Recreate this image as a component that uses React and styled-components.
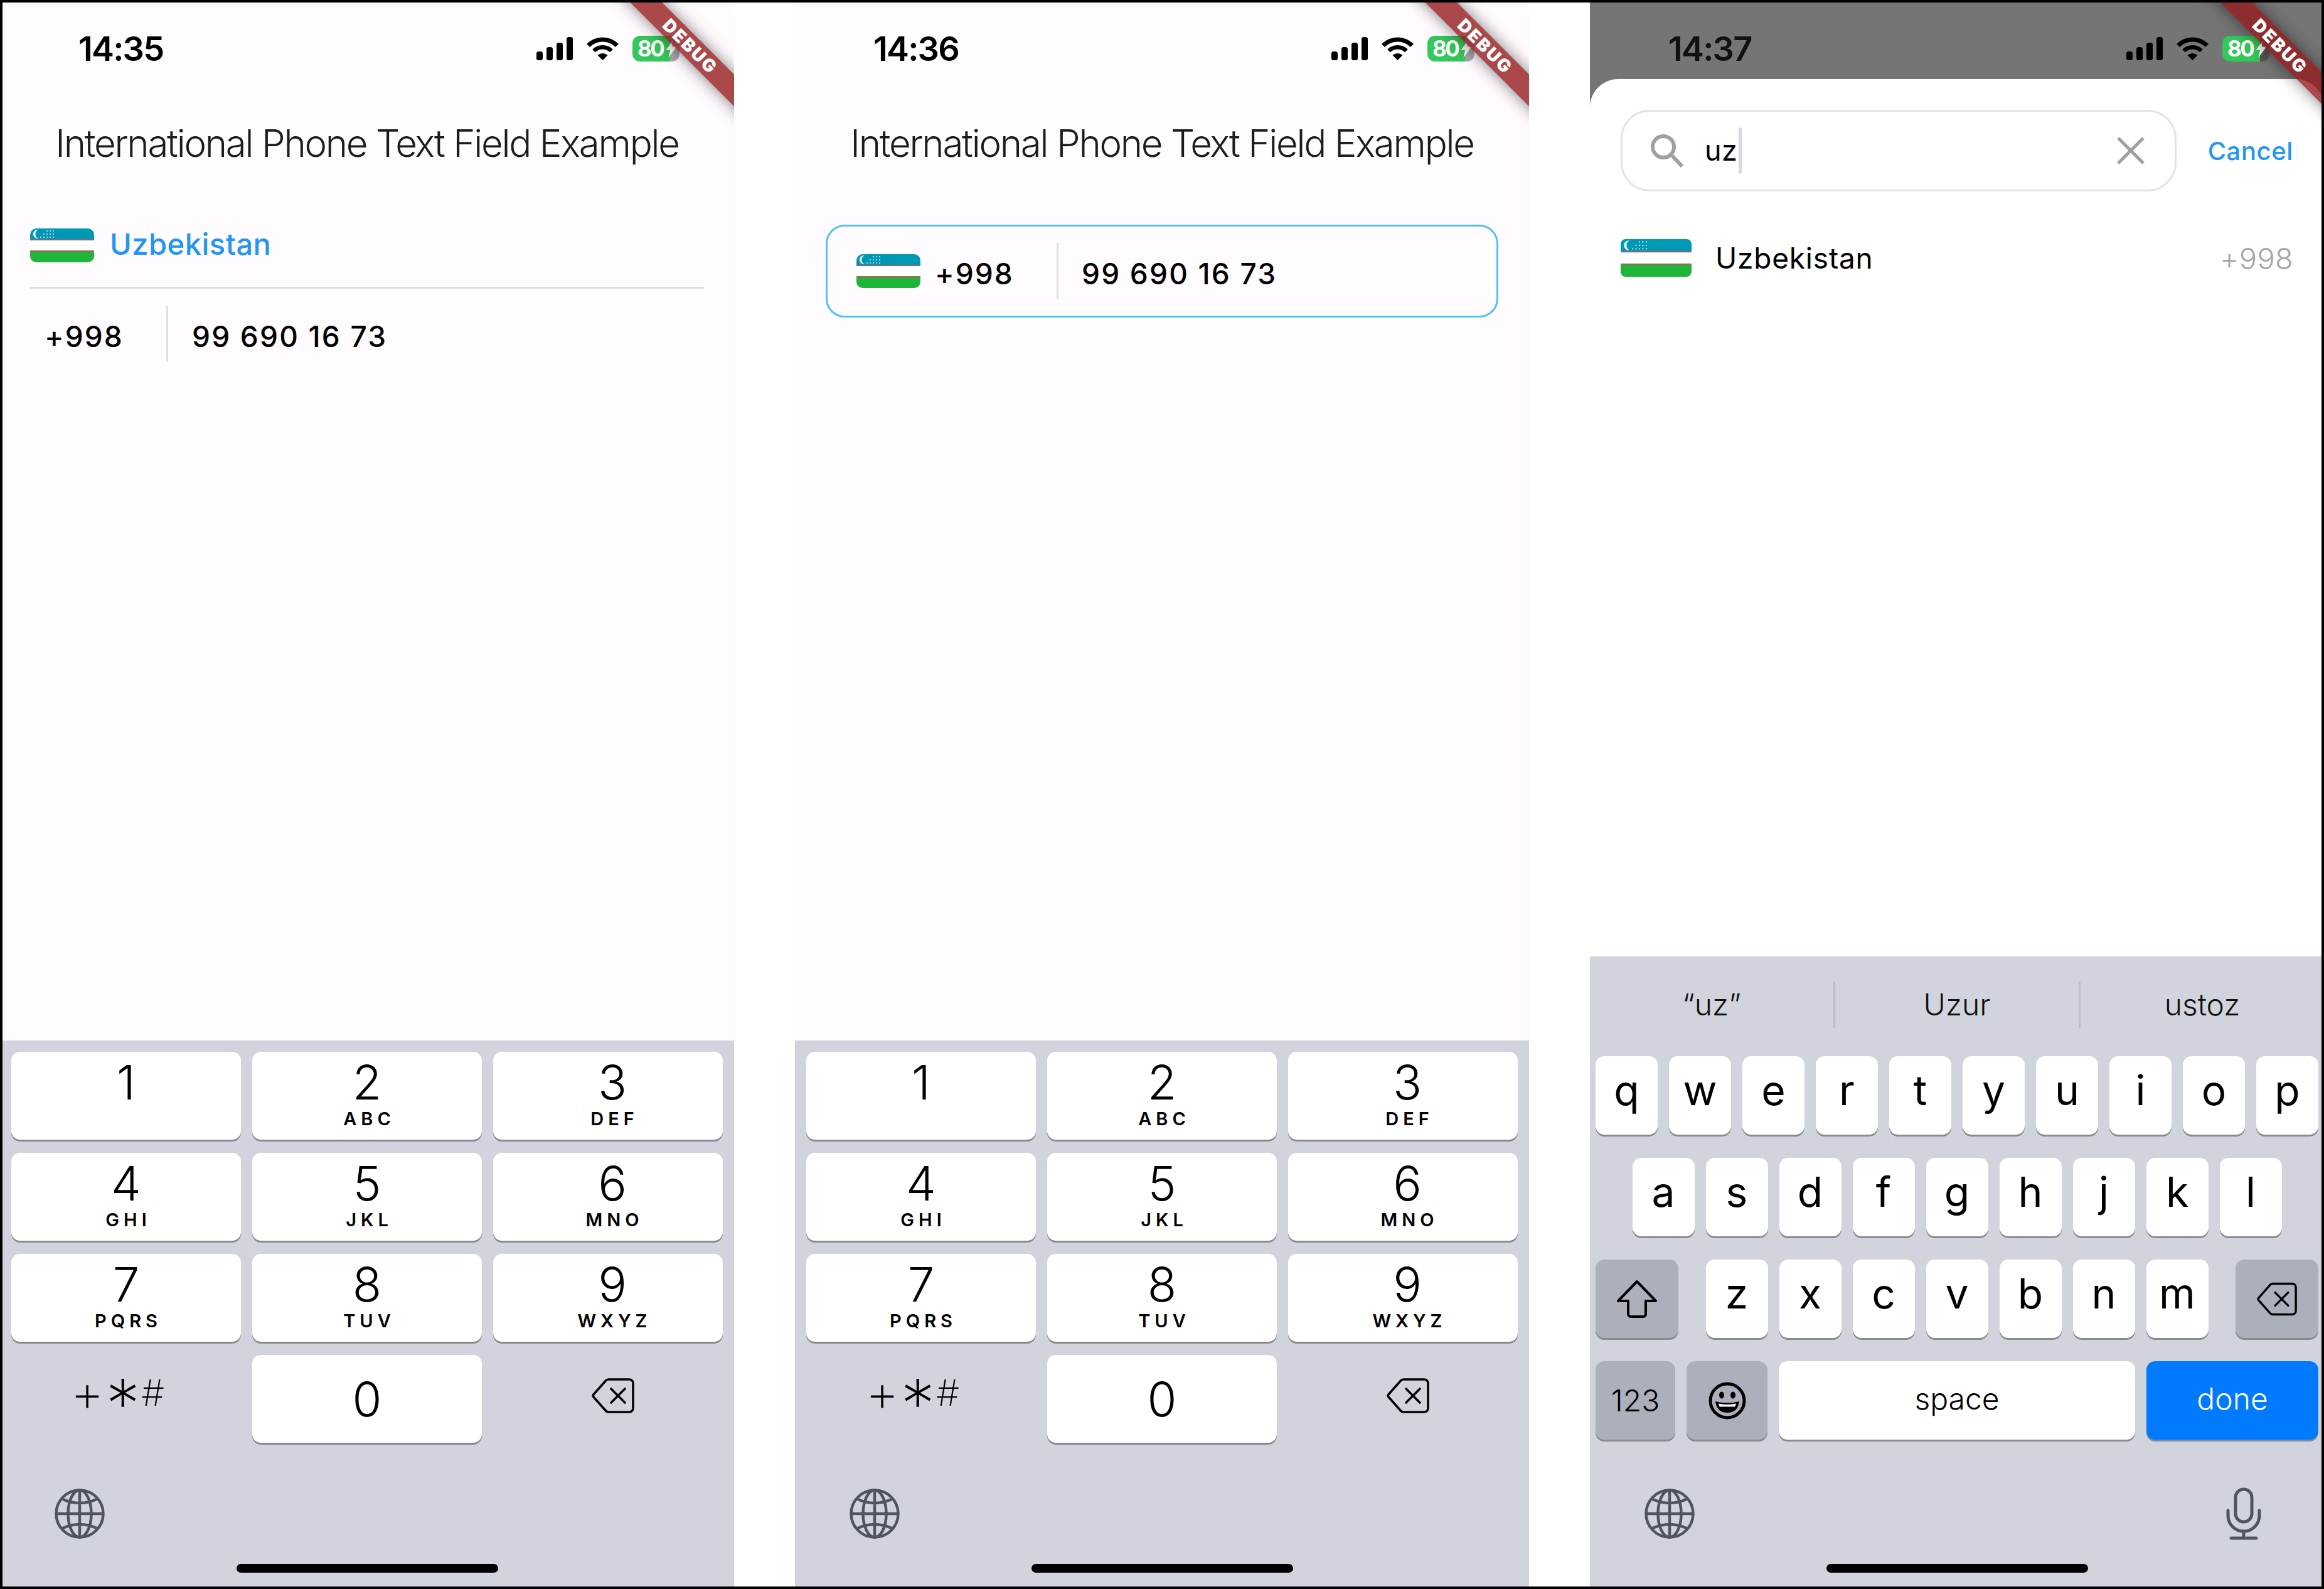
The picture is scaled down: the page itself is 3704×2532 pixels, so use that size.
import React from 'react'
import styled, { createGlobalStyle } from 'styled-components'

const GlobalStyle = createGlobalStyle`
  html, body { margin: 0; padding: 0; background: #fff; }
  * { box-sizing: border-box; }
`

const Page = styled.div`
  position: relative;
  width: 3704px;
  height: 2532px;
  background: #fff;
  display: flex;
  justify-content: space-between;
  font-family: Inter, "Liberation Sans", sans-serif;
  color: #000;
  overflow: hidden;
`

// the black line of the screenshot runs over the outer phones
const Frame = styled.div`
  position: absolute;
  inset: 0;
  border: 4px solid #000;
  pointer-events: none;
`

const Phone = styled.div`
  position: relative;
  width: 1170px;
  height: 100%;
  padding: 4px 0;
  overflow: hidden;
  display: flex;
  flex-direction: column;
  background: ${(p) => (p.$dim ? '#757575' : '#fffbff')};
`

const StatusBar = styled.div`
  height: 122px;
  flex-shrink: 0;
  padding: 53px 0 0 125px;
  display: flex;
  align-items: flex-start;
`

const Time = styled.div`
  width: 730px;
  font-size: 54px;
  line-height: 41px;
  font-weight: 600;
  letter-spacing: -1.8px;
  color: ${(p) => (p.$dim ? '#111' : '#000')};
`

const StatusIcons = styled.div`
  display: flex;
  align-items: center;
  height: 41px;
  gap: 22px;
`

const Battery = styled.div`
  width: 75px;
  height: 41px;
  border-radius: 12px;
  background: linear-gradient(90deg, #34c759 0 60px, ${(p) => (p.$dim ? '#555' : '#a9a9ab')} 60px);
  color: #fff;
  display: flex;
  align-items: center;
  gap: 4px;
  padding-left: 8px;
  font-size: 35px;
  line-height: 41px;
  font-weight: 700;
  letter-spacing: -2.5px;
`

const BannerClip = styled.div`
  position: absolute;
  top: 0;
  right: 0;
  width: 240px;
  height: 240px;
  overflow: hidden;
  pointer-events: none;
`

const BannerStrip = styled.div`
  position: absolute;
  left: -30px;
  top: 56px;
  width: 400px;
  height: 36px;
  transform: rotate(45deg);
  background: rgba(148, 26, 26, 0.79);
  box-shadow: 0 0 26px rgba(0, 0, 0, 0.5);
  color: #fff;
  font-size: 28px;
  line-height: 36px;
  font-weight: 900;
  letter-spacing: 2.6px;
  text-align: center;
`

const AppTitle = styled.div`
  margin-top: 52px;
  height: 100px;
  line-height: 100px;
  text-align: center;
  font-size: 60px;
  font-weight: 300;
  letter-spacing: -2.25px;
  color: #1c1b1f;
`

const Body = styled.div`
  padding: 0 48px;
`

const CountryRow = styled.div`
  margin-top: 66px;
  padding: 20px 0 39px;
  border-bottom: 3px solid #e0dde0;
  display: flex;
  align-items: center;
  gap: 25px;
`

const CountryName = styled.span`
  font-size: 47px;
  line-height: 50px;
  margin-bottom: 4px;
  font-weight: 500;
  letter-spacing: 0.5px;
  color: #2196f3;
`

const NumberRow = styled.div`
  margin-top: 27px;
  height: 90px;
  display: flex;
  align-items: center;
`

const Prefix = styled.div`
  width: 220px;
  height: 100%;
  padding: 8px 0 0 23px;
  border-right: 3px solid #e2dfe2;
  font-size: 46px;
  line-height: 82px;
  font-weight: 500;
  letter-spacing: 2px;
`

const PhoneNumber = styled.div`
  padding: 8px 0 0 ${(p) => p.$gap}px;
  font-size: 46px;
  line-height: 82px;
  font-weight: 500;
  letter-spacing: 2.2px;
`

const OutlineField = styled.div`
  margin: 80px 0 0 49px;
  width: 1072px;
  height: 148px;
  border: 3px solid #4fc3f7;
  border-radius: 30px;
  display: flex;
  align-items: center;
  padding-left: 46px;
`

const FieldPrefix = styled.div`
  margin-left: 23px;
  width: 197px;
  height: 90px;
  border-right: 3px solid #e2dfe2;
  padding-top: 8px;
  font-size: 46px;
  line-height: 82px;
  font-weight: 500;
  letter-spacing: 2px;
`

const Sheet = styled.div`
  flex: 1;
  display: flex;
  flex-direction: column;
  background: #fff;
  border-radius: 45px 45px 0 0;
  overflow: hidden;
`

const SearchRow = styled.div`
  padding: 49px 49px 0 49px;
  display: flex;
  align-items: center;
  justify-content: space-between;
`

const SearchBox = styled.div`
  width: 886px;
  height: 130px;
  border: 3px solid #e3e3e3;
  border-radius: 46px;
  display: flex;
  align-items: center;
  padding: 0 48px 0 44px;
`

const SearchText = styled.div`
  margin-left: 33px;
  font-size: 45px;
  line-height: 60px;
  letter-spacing: 0.5px;
`

const Caret = styled.div`
  width: 5px;
  height: 74px;
  margin: 0 auto 0 2px;
  border-radius: 3px;
  background: #d6d6ee;
`

const CancelLink = styled.span`
  font-size: 40px;
  font-weight: 500;
  letter-spacing: 0.6px;
  color: #2196f3;
`

const ResultRow = styled.div`
  margin-top: 76px;
  padding: 0 49px;
  display: flex;
  align-items: center;
`

const ResultName = styled.span`
  margin-left: 38px;
  flex: 1;
  font-size: 46px;
  font-weight: 400;
  letter-spacing: 0.8px;
`

const ResultCode = styled.span`
  font-size: 47px;
  font-weight: 300;
  letter-spacing: 0.3px;
  color: #a6a6a6;
`

const Keyboard = styled.div`
  margin-top: auto;
  height: ${(p) => p.$height}px;
  flex-shrink: 0;
  background: #d1d4dc;
  display: flex;
  flex-direction: column;
`

const PadGrid = styled.div`
  padding: 18px 18px 0;
  display: grid;
  grid-template-columns: repeat(3, 366px);
  grid-auto-rows: 140px;
  column-gap: 18px;
  row-gap: 21px;
`

const PadKey = styled.div`
  background: ${(p) => (p.$flat ? 'transparent' : '#fff')};
  border-radius: 14px;
  box-shadow: ${(p) => (p.$flat ? 'none' : '0 3px 0 #898a8d')};
  display: flex;
  flex-direction: column;
  align-items: center;
  justify-content: ${(p) => (p.$center ? 'center' : 'flex-start')};
  padding-top: ${(p) => (p.$center ? 0 : 10)}px;
  &:nth-child(3n) {
    padding-left: 14px;
  }
`

const Digit = styled.div`
  font-size: 76px;
  line-height: 76px;
  font-weight: 350;
`

const Letters = styled.div`
  margin-top: 6px;
  font-size: 29px;
  line-height: 30px;
  font-weight: 600;
  letter-spacing: 7px;
  padding-left: 7px;
`

const Symbols = styled.div`
  display: flex;
  align-items: center;
  height: 60px;
  gap: 2px;
  margin: 0 28px 20px 0;
  font-weight: 200;
`

const Symbol = styled.span`
  font-size: ${(p) => p.$size}px;
  line-height: 60px;
  transform: translateY(${(p) => p.$drop || 0}px);
`

const BackspaceSlot = styled.div`
  margin: 0 0 10px 2px;
  display: flex;
`

const Suggestions = styled.div`
  height: 159px;
  flex-shrink: 0;
  padding-top: 40px;
  display: flex;
  align-items: flex-start;
`

const Suggestion = styled.div`
  flex: 1;
  height: 74px;
  line-height: 74px;
  text-align: center;
  font-size: 48px;
  font-weight: 300;
  color: #111;
  & + & {
    border-left: 3px solid #bcbfc6;
  }
`

const KeyRows = styled.div`
  padding: 0 9px;
  display: flex;
  flex-direction: column;
  gap: 37px;
`

const KeyRow = styled.div`
  display: flex;
  gap: 18px;
  justify-content: ${(p) => p.$justify || 'center'};
`

const LetterGroup = styled.div`
  display: flex;
  gap: 18px;
`

const Key = styled.div`
  width: ${(p) => p.$w || 99}px;
  height: 125px;
  flex-shrink: 0;
  border-radius: 14px;
  background: ${(p) => p.$bg || '#fff'};
  color: ${(p) => p.$color || '#000'};
  box-shadow: 0 3px 0 #898a8d;
  display: flex;
  align-items: center;
  justify-content: center;
  font-size: ${(p) => p.$size || 66}px;
  font-weight: ${(p) => (p.$size ? 350 : 400)};
  padding-bottom: ${(p) => p.$raise ?? 18}px;
`

const KeyboardFooter = styled.div`
  margin-top: auto;
  padding: 0 100px 0 87px;
  height: 84px;
  display: flex;
  align-items: center;
  justify-content: space-between;
`

const HomeBar = styled.div`
  width: 417px;
  height: 14px;
  margin: 38px auto 22px;
  border-radius: 7px;
  background: #000;
`

const FlagSvg = styled.svg`
  display: block;
  flex-shrink: 0;
  border-radius: ${(p) => p.$radius || 10}px;
`

const flagStars = [
  [27, 4], [32, 4], [37, 4],
  [22, 9], [27, 9], [32, 9], [37, 9],
  [17, 14], [22, 14], [27, 14], [32, 14], [37, 14],
]

const Flag = ({ w = 102, h = 54, radius }) => (
  <FlagSvg viewBox="0 0 102 54" width={w} height={h} $radius={radius} preserveAspectRatio="none">
    <rect width="102" height="54" fill="#fff" />
    <rect width="102" height="18" fill="#0099b5" />
    <rect y="36" width="102" height="18" fill="#1eb53a" />
    <rect y="17.5" width="102" height="1.6" fill="#c8505f" />
    <rect y="35" width="102" height="1.6" fill="#c8505f" />
    <path d="M13 2.100A7 7 0 1 0 13 15.900A7.500 7.500 0 0 1 13 2.100z" fill="#eef9fb" />
    {flagStars.map(([x, y]) => (
      <circle key={`${x}-${y}`} cx={x} cy={y} r="1" fill="#d6f0f4" />
    ))}
  </FlagSvg>
)

const SignalIcon = () => (
  <svg width="58" height="37" viewBox="0 0 58 37" fill="#000">
    <rect x="0" y="23" width="10" height="14" rx="3.500" />
    <rect x="16" y="16" width="10" height="21" rx="3.500" />
    <rect x="32" y="9" width="10" height="28" rx="3.500" />
    <rect x="48" y="0" width="10" height="37" rx="3.500" />
  </svg>
)

const WifiIcon = () => (
  <svg width="51" height="37" viewBox="0 0 51 37" fill="none" stroke="#000" strokeWidth="7">
    <path d="M2.500 13.500a32.500 32.500 0 0 1 46 0" />
    <path d="M11.500 22a20 20 0 0 1 28 0" strokeWidth="6.500" />
    <path d="M25.500 37L17.500 29Q25.500 23 33.500 29Z" fill="#000" stroke="none" />
  </svg>
)

const BoltIcon = () => (
  <svg width="18" height="28" viewBox="0 0 18 30" fill="#fff">
    <path d="M12 0L0 17h7L4 30L18 11h-8z" />
  </svg>
)

const BackspaceIcon = ({ w = 68, h = 58 }) => (
  <svg width={w} height={h} viewBox="0 0 68 58" fill="none" stroke="#000" strokeWidth="3.600" strokeLinejoin="round" strokeLinecap="round">
    <path d="M27 3h33a6 6 0 0 1 6 6v40a6 6 0 0 1-6 6H27a6 6 0 0 1-4.500-2L3 31a3 3 0 0 1 0-4L22.500 5a6 6 0 0 1 4.500-2z" />
    <path d="M31 18l22 22M53 18L31 40" />
  </svg>
)

const ShiftIcon = () => (
  <svg width="64" height="62" viewBox="0 0 64 62" fill="none" stroke="#000" strokeWidth="4" strokeLinejoin="round">
    <path d="M32 3L2 34h16v21a4 4 0 0 0 4 4h20a4 4 0 0 0 4-4V34h16z" />
  </svg>
)

const EmojiIcon = () => (
  <svg width="60" height="60" viewBox="0 0 60 60">
    <circle cx="30" cy="30" r="27" fill="none" stroke="#000" strokeWidth="5" />
    <ellipse cx="21" cy="21" rx="4" ry="5.500" />
    <ellipse cx="39" cy="21" rx="4" ry="5.500" />
    <path d="M11 31q19 5 38 0q-2 18-19 18T11 31z" fill="#000" />
    <path d="M16 34.500q14 3 28 0q-1 4-2 5H18q-1-1-2-5z" fill="#fff" />
  </svg>
)

const GlobeIcon = () => (
  <svg width="80" height="80" viewBox="0 0 80 80" fill="none" stroke="#50545c" strokeWidth="4.500">
    <circle cx="40" cy="40" r="37.500" />
    <ellipse cx="40" cy="40" rx="18.500" ry="37.500" />
    <path d="M40 2.500v75M2.500 40h75M13 17q27 12 54 0M13 63q27-12 54 0" />
  </svg>
)

const MicIcon = () => (
  <svg width="56" height="84" viewBox="0 0 56 84" fill="none" stroke="#50545c" strokeWidth="5" strokeLinecap="round">
    <rect x="15" y="3" width="26" height="52" rx="13" />
    <path d="M3 37v8a25 25 0 0 0 50 0v-8M28 70v11M8 81h40" />
  </svg>
)

const SearchIcon = () => (
  <svg width="54" height="54" viewBox="0 0 54 54" fill="none" stroke="#a0a0a0" strokeWidth="6">
    <circle cx="21" cy="21" r="17" />
    <path d="M33 33l18 19" />
  </svg>
)

const ClearIcon = () => (
  <svg width="44" height="44" viewBox="0 0 44 44" fill="none" stroke="#9e9e9e" strokeWidth="5">
    <path d="M2 2l40 40M42 2L2 42" />
  </svg>
)

const StatusRow = ({ time, dim }) => (
  <StatusBar>
    <Time $dim={dim}>{time}</Time>
    <StatusIcons>
      <SignalIcon />
      <WifiIcon />
      <Battery $dim={dim}>
        80
        <BoltIcon />
      </Battery>
    </StatusIcons>
  </StatusBar>
)

const Banner = () => (
  <BannerClip>
    <BannerStrip>DEBUG</BannerStrip>
  </BannerClip>
)

const padKeys = [
  ['1', ''],
  ['2', 'ABC'],
  ['3', 'DEF'],
  ['4', 'GHI'],
  ['5', 'JKL'],
  ['6', 'MNO'],
  ['7', 'PQRS'],
  ['8', 'TUV'],
  ['9', 'WXYZ'],
]

const NumberPad = () => (
  <Keyboard $height={870}>
    <PadGrid>
      {padKeys.map(([digit, letters]) => (
        <PadKey key={digit}>
          <Digit>{digit}</Digit>
          <Letters>{letters}</Letters>
        </PadKey>
      ))}
      <PadKey $flat $center>
        <Symbols>
          <Symbol $size={84}>+</Symbol>
          <Symbol $size={110} $drop={18}>*</Symbol>
          <Symbol $size={58}>#</Symbol>
        </Symbols>
      </PadKey>
      <PadKey $center>
        <Digit>0</Digit>
      </PadKey>
      <PadKey $flat $center>
        <BackspaceSlot>
          <BackspaceIcon />
        </BackspaceSlot>
      </PadKey>
    </PadGrid>
    <KeyboardFooter>
      <GlobeIcon />
    </KeyboardFooter>
    <HomeBar />
  </Keyboard>
)

const LetterKeyboard = () => (
  <Keyboard $height={1004}>
    <Suggestions>
      <Suggestion>“uz”</Suggestion>
      <Suggestion>Uzur</Suggestion>
      <Suggestion>ustoz</Suggestion>
    </Suggestions>
    <KeyRows>
      <KeyRow>
        {'qwertyuiop'.split('').map((c) => <Key key={c}>{c}</Key>)}
      </KeyRow>
      <KeyRow>
        {'asdfghjkl'.split('').map((c) => <Key key={c}>{c}</Key>)}
      </KeyRow>
      <KeyRow $justify="space-between">
        <Key $w={132} $bg="#abb0bb" $raise={0}><ShiftIcon /></Key>
        <LetterGroup>
          {'zxcvbnm'.split('').map((c) => <Key key={c}>{c}</Key>)}
        </LetterGroup>
        <Key $w={132} $bg="#abb0bb" $raise={0}><BackspaceIcon w={64} h={56} /></Key>
      </KeyRow>
      <KeyRow $justify="space-between">
        <LetterGroup>
          <Key $w={127} $bg="#abb0bb" $size={48} $raise={0}>123</Key>
          <Key $w={129} $bg="#abb0bb" $raise={0}><EmojiIcon /></Key>
          <Key $w={568} $size={48} $raise={6}>space</Key>
        </LetterGroup>
        <Key $w={274} $bg="#007aff" $color="#fff" $size={48} $raise={6}>done</Key>
      </KeyRow>
    </KeyRows>
    <KeyboardFooter>
      <GlobeIcon />
      <MicIcon />
    </KeyboardFooter>
    <HomeBar />
  </Keyboard>
)

const App = () => (
  <Page>
    <GlobalStyle />
    <Phone>
      <StatusRow time="14:35" />
      <AppTitle>International Phone Text Field Example</AppTitle>
      <Body>
        <CountryRow>
          <Flag />
          <CountryName>Uzbekistan</CountryName>
        </CountryRow>
        <NumberRow>
          <Prefix>+998</Prefix>
          <PhoneNumber $gap={38}>99 690 16 73</PhoneNumber>
        </NumberRow>
      </Body>
      <NumberPad />
      <Banner />
    </Phone>
    <Phone>
      <StatusRow time="14:36" />
      <AppTitle>International Phone Text Field Example</AppTitle>
      <OutlineField>
        <Flag />
        <FieldPrefix>+998</FieldPrefix>
        <PhoneNumber $gap={37}>99 690 16 73</PhoneNumber>
      </OutlineField>
      <NumberPad />
      <Banner />
    </Phone>
    <Phone $dim>
      <StatusRow time="14:37" dim />
      <Sheet>
        <SearchRow>
          <SearchBox>
            <SearchIcon />
            <SearchText>uz</SearchText>
            <Caret />
            <ClearIcon />
          </SearchBox>
          <CancelLink>Cancel</CancelLink>
        </SearchRow>
        <ResultRow>
          <Flag w={113} h={60} radius={8} />
          <ResultName>Uzbekistan</ResultName>
          <ResultCode>+998</ResultCode>
        </ResultRow>
        <LetterKeyboard />
      </Sheet>
      <Banner />
    </Phone>
    <Frame />
  </Page>
)

export default App
